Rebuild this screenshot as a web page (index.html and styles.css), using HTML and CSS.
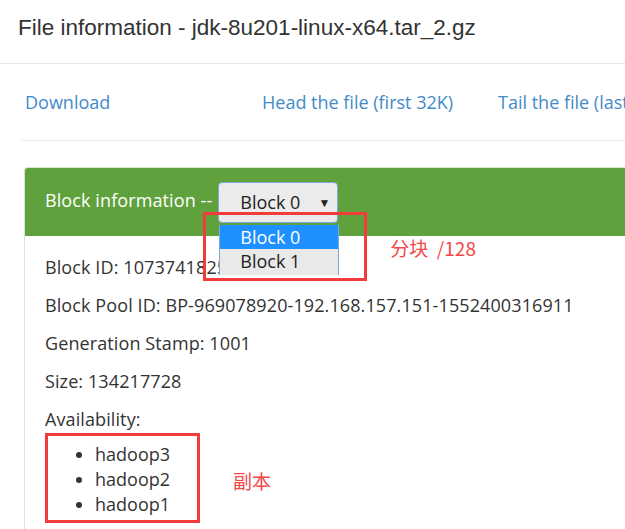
FILE: index.html
```html
<!DOCTYPE html>
<html>
<head>
<meta charset="utf-8">
<link rel="stylesheet" href="styles.css">
</head>
<body>
<div class="page-header">
  <h1>File information - jdk-8u201-linux-x64.tar_2.gz</h1>
</div>
<div class="container">
  <div class="links">
    <a href="#">Download</a>
    <a href="#">Head the file (first 32K)</a>
    <a href="#">Tail the file (last 32K)</a>
  </div>
  <hr class="sep">
  <div class="panel">
    <div class="panel-heading">
      <span class="heading-text">Block information --</span>
      <div class="select-wrap">
        <div class="select"><span>Block 0</span><span class="caret">&#9660;</span></div>
        <ul class="dropdown">
          <li class="active">Block 0</li>
          <li>Block 1</li>
        </ul>
        <div class="mark mark-select"></div>
        <span class="note note-block">分块&nbsp;&nbsp;/128</span>
      </div>
    </div>
    <div class="panel-body">
      <p>Block ID: 1073741825</p>
      <p>Block Pool ID: BP-969078920-192.168.157.151-1552400316911</p>
      <p>Generation Stamp: 1001</p>
      <p>Size: 134217728</p>
      <p>Availability:</p>
      <div class="avail">
        <ul class="nodes">
          <li>hadoop3</li>
          <li>hadoop2</li>
          <li>hadoop1</li>
        </ul>
        <span class="note note-replica">副本</span>
      </div>
    </div>
  </div>
</div>
</body>
</html>
```

FILE: styles.css
```css
html, body {
  margin: 0;
  padding: 0;
  background: #fff;
  overflow: hidden;
}
body {
  width: 625px;
  height: 529px;
  overflow: hidden;
  font-family: "Open Sans", "Noto Sans", sans-serif;
  color: #333;
}
.page-header {
  border-bottom: 1px solid #e5e5e5;
  height: 64px;
  box-sizing: border-box;
  padding: 14px 0 0 18px;
}
.page-header h1 {
  margin: 0;
  font-family: "Liberation Sans", Arial, sans-serif;
  font-weight: normal;
  font-size: 22.5px;
  line-height: 28px;
  color: #333;
  white-space: nowrap;
}
.container {
  padding-left: 20px;
}
.links {
  display: grid;
  grid-template-columns: 237px 236px 127px;
  padding: 26px 0 0 5px;
  height: 51px;
  box-sizing: border-box;
  white-space: nowrap;
  overflow: hidden;
}
.links a {
  color: #428bca;
  text-decoration: none;
  font-size: 18px;
  line-height: 25px;
  overflow: hidden;
}
.sep {
  margin: 25px 0 0 0;
  border: 0;
  border-top: 1px solid #eee;
  height: 0;
}
.panel {
  margin: 26px 0 0 4px;
  border: 1px solid #d6e9c6;
  border-right: 0;
  border-bottom: 0;
  border-radius: 4px 0 0 0;
  height: 362px;
}
.panel-heading {
  background: #5fa23d;
  height: 68px;
  box-sizing: border-box;
  display: flex;
  align-items: center;
  padding-left: 20px;
  border-radius: 3px 0 0 0;
}
.heading-text {
  color: #fff;
  font-size: 18px;
  margin-right: 6px;
  margin-bottom: 4px;
  letter-spacing: 0.1px;
}
.select-wrap {
  position: relative;
}
.select {
  width: 120px;
  height: 41px;
  box-sizing: border-box;
  background: #ebebeb;
  border: 1px solid #7ea9da;
  border-radius: 4px;
  display: flex;
  align-items: center;
  padding-left: 21px;
  font-size: 18px;
  color: #222;
}
.caret {
  font-size: 12px;
  margin-left: auto;
  margin-right: 7px;
  color: #222;
}
.dropdown {
  position: absolute;
  left: 1px;
  top: 43px;
  width: 120px;
  margin: 0;
  padding: 0;
  list-style: none;
  box-sizing: border-box;
  border-left: 1px solid #7ea9da;
  border-right: 1px solid #7ea9da;
  z-index: 2;
}
.dropdown li {
  height: 26px;
  line-height: 25px;
  padding-left: 20px;
  font-size: 18px;
  background: #e9e9e9;
  color: #222;
}
.dropdown li.active {
  background: #1e90ff;
  color: #fff;
  height: 24px;
  line-height: 24px;
}
.mark {
  position: absolute;
  border: 3px solid #f33b3b;
  box-sizing: border-box;
  z-index: 3;
}
.mark-select {
  left: -15px;
  top: 30px;
  width: 164px;
  height: 69px;
}
.note {
  position: absolute;
  color: #f44848;
  font-family: "Noto Sans CJK SC", sans-serif;
  font-size: 19px;
  white-space: nowrap;
}
.note-block {
  left: 172px;
  top: 52px;
}
.panel-body {
  padding: 19px 0 0 20px;
}
.panel-body p {
  margin: 0 0 13px 0;
  font-size: 18px;
  line-height: 25px;
  white-space: nowrap;
  letter-spacing: 0.1px;
}
.avail {
  position: relative;
  width: 155px;
  height: 90px;
  box-sizing: border-box;
  border: 3px solid #f33b3b;
  margin-top: -12px;
  padding-top: 6px;
}
.nodes {
  margin: 0;
  padding-left: 47px;
  font-size: 18px;
  line-height: 25px;
}
.note-replica {
  left: 185px;
  top: 31px;
}
```
